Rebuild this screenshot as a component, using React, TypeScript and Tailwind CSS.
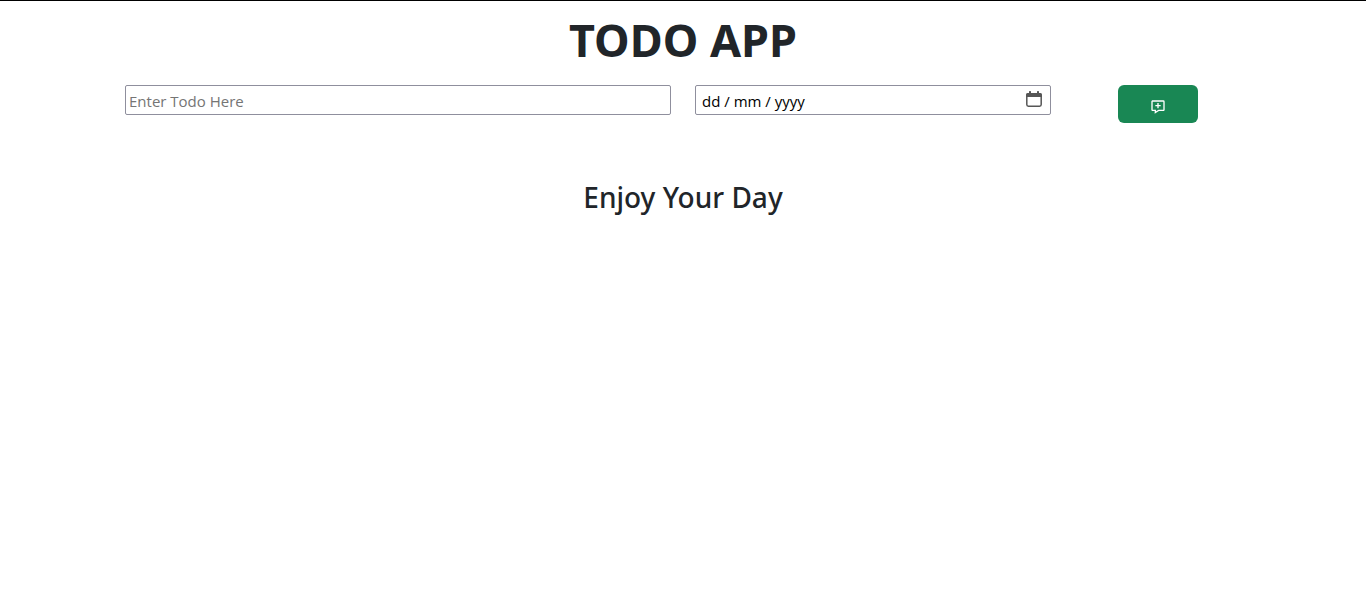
import { useRef } from "react";

function CalendarIcon() {
  return (
    <svg width="16" height="16" viewBox="0 0 16 16" fill="none" aria-hidden="true">
      <path d="M2 2H14A2 2 0 0 1 16 4V6H0V4A2 2 0 0 1 2 2Z" fill="#565656" />
      <rect x="3" y="0" width="2" height="3" rx="0.6" fill="#565656" />
      <rect x="11" y="0" width="2" height="3" rx="0.6" fill="#565656" />
      <rect x="0.8" y="2.8" width="14.4" height="12.4" rx="1.6" stroke="#565656" strokeWidth="1.5" />
    </svg>
  );
}

function AddMessageIcon() {
  return (
    <svg width="16" height="16" viewBox="0 0 24 24" fill="currentColor" aria-hidden="true">
      <path d="M20 2H4c-1.103 0-2 .894-2 1.992v12.016C2 17.106 2.897 18 4 18h3v4l6.351-4H20c1.103 0 2-.894 2-1.992V3.992A1.998 1.998 0 0 0 20 2zm0 14h-7.227L9 18.377V16H4V4h16v12z" />
      <path d="M13 6h-2v3H8v2h3v3h2v-3h3V9h-3z" />
    </svg>
  );
}

export default function App() {
  const dateRef = useRef<HTMLInputElement>(null);
  return (
    <main className="border-t border-black bg-white px-3 font-['Open_Sans','Noto_Sans',sans-serif] text-[15px] text-[#212529]">
      <h1 className="mt-3 text-center font-['Noto_Sans',sans-serif] text-[45px] leading-[54px] font-bold">TODO APP</h1>
      <form className="mx-auto mt-[18px] grid max-w-[1140px] grid-cols-12 gap-x-6 px-3" onSubmit={(e) => e.preventDefault()}>
        <input
          type="text"
          aria-label="Todo"
          placeholder="Enter Todo Here"
          className="col-span-6 h-[30px] rounded-xs border border-[#8f8f9d] px-[3px] pt-0.5 placeholder:text-[#757575]"
        />
        <div className="col-span-4 flex h-[30px] rounded-xs border border-[#8f8f9d] pr-2 pl-1.5">
          <input
            ref={dateRef}
            type="text"
            aria-label="Due date"
            placeholder="dd / mm / yyyy"
            className="min-w-0 flex-1 pt-0.5 text-black outline-none placeholder:text-black"
          />
          <button type="button" aria-label="Choose date" className="flex items-center pb-0.5" onClick={() => dateRef.current?.focus()}>
            <CalendarIcon />
          </button>
        </div>
        <button
          type="submit"
          aria-label="Add todo"
          className="col-span-2 flex h-[38px] w-20 items-center justify-center justify-self-center rounded-md bg-[#198754] pt-1.5 text-white"
        >
          <AddMessageIcon />
        </button>
      </form>
      <h2 className="mt-14 text-center font-['Noto_Sans',sans-serif] text-[28px] leading-9 font-medium">Enjoy Your Day</h2>
    </main>
  );
}
